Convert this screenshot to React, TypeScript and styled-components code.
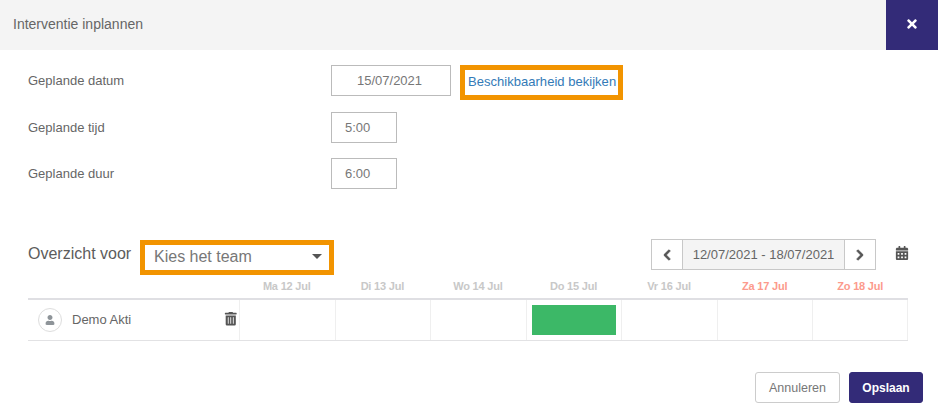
import React from 'react';
import styled, { createGlobalStyle } from 'styled-components';
import { FaTimes, FaChevronLeft, FaChevronRight, FaTrashAlt, FaCalendarAlt, FaUser } from 'react-icons/fa';

const GlobalStyle = createGlobalStyle`
  html, body {
    margin: 0;
    padding: 0;
    background: #fff;
  }
  body {
    font-family: "Liberation Sans", Arial, sans-serif;
    font-size: 13px;
    color: #666;
  }
  * {
    box-sizing: border-box;
  }
`;

const Modal = styled.div`
  width: 938px;
  height: 414px;
  overflow: hidden;
  background: #fff;
`;

const Header = styled.header`
  display: flex;
  align-items: center;
  justify-content: space-between;
  height: 50px;
  padding-left: 13px;
  background: #f4f4f4;
`;

const Title = styled.h4`
  margin: 0 0 3px;
  font-size: 14px;
  font-weight: 400;
  color: #666;
`;

const CloseButton = styled.button`
  display: flex;
  align-items: center;
  justify-content: center;
  width: 52px;
  height: 50px;
  border: 0;
  padding: 0 0 2px;
  background: #332b78;
  color: #fff;
  font-size: 14px;
`;

const Form = styled.section`
  display: flex;
  flex-direction: column;
  padding: 15px 0 0 28px;
  height: 190px;
`;

const FormRow = styled.div`
  display: flex;
  align-items: flex-start;
  height: ${props => props.$height}px;
`;

const Label = styled.label`
  width: 303px;
  line-height: 31px;
  color: #666;
`;

const Input = styled.div`
  width: ${props => props.$width}px;
  height: 31px;
  border: 1px solid #bbb;
  padding-left: ${props => props.$pad}px;
  line-height: 29px;
  font-size: 13px;
  color: #777;
`;

const Highlight = styled.div`
  display: flex;
  align-items: center;
  border: 5px solid #f29400;
`;

const LinkBox = styled(Highlight)`
  width: 163px;
  height: 35px;
  margin-left: 9px;
  padding: 0 0 3px 3px;
`;

const AvailabilityLink = styled.a`
  color: #337ab7;
  font-size: 13px;
  letter-spacing: 0.03px;
  white-space: nowrap;
`;

const Toolbar = styled.div`
  display: flex;
  align-items: flex-start;
  height: 35px;
  padding-left: 28px;
`;

const OverviewLabel = styled.span`
  width: 112px;
  padding-top: 5px;
  font-size: 16px;
  color: #5c5c5c;
`;

const SelectBox = styled(Highlight)`
  justify-content: space-between;
  width: 194px;
  height: 35px;
  padding: 0 7px 2px 9px;
  font-size: 16px;
  color: #777;
`;

const Caret = styled.span`
  width: 0;
  height: 0;
  border-left: 5px solid transparent;
  border-right: 5px solid transparent;
  border-top: 5px solid #555;
`;

const Pager = styled.div`
  display: flex;
  height: 31px;
  margin: -1px 0 0 317px;
  border: 1px solid #c8c8c8;
`;

const PagerButton = styled.button`
  display: flex;
  align-items: center;
  justify-content: center;
  width: 30px;
  padding: 0;
  border: 0;
  background: #fff;
  color: #555;
  font-size: 12px;
  svg {
    stroke: currentColor;
    stroke-width: 36;
  }
`;

const PagerRange = styled.div`
  width: 163px;
  border-left: 1px solid #c8c8c8;
  border-right: 1px solid #c8c8c8;
  background: #f4f4f4;
  line-height: 29px;
  text-align: center;
  font-size: 13px;
  color: #666;
`;

const CalendarButton = styled.span`
  display: flex;
  margin: 6px 0 0 19px;
  color: #555;
  font-size: 14px;
`;

const Schedule = styled.div`
  margin: 0 30px 0 28px;
`;

const DayHeader = styled.div`
  display: grid;
  grid-template-columns: 211px repeat(7, 1fr);
  height: 23px;
  padding-bottom: 2px;
  align-items: center;
`;

const Day = styled.span`
  text-align: center;
  font-size: 11px;
  font-weight: 700;
  letter-spacing: -0.2px;
  color: ${props => (props.$weekend ? '#fc9a8c' : '#c8c8c8')};
`;

const Row = styled.div`
  display: grid;
  grid-template-columns: 211px repeat(7, 1fr);
  height: 43px;
  border-top: 2px solid #dfdfe3;
  border-bottom: 1px solid #e2e2e4;
`;

const Person = styled.div`
  display: flex;
  align-items: center;
  padding: 0 2px 0 10px;
`;

const Avatar = styled.span`
  display: flex;
  align-items: center;
  justify-content: center;
  width: 24px;
  height: 24px;
  border: 1px solid #ddd;
  border-radius: 50%;
  color: #8e9499;
  font-size: 10px;
`;

const Name = styled.span`
  flex: 1;
  margin: 0 0 2px 10px;
  font-size: 13px;
  color: #666;
`;

const DeleteIcon = styled.span`
  display: flex;
  margin-bottom: 2px;
  color: #555;
  font-size: 13.5px;
`;

const Cell = styled.div`
  padding: 5px;
  border-left: 1px solid #efefef;
  &:last-child {
    border-right: 1px solid #efefef;
  }
`;

const Bar = styled.div`
  height: 30px;
  background: #3cb867;
`;

const Footer = styled.footer`
  display: flex;
  justify-content: flex-end;
  gap: 9px;
  margin-top: 31px;
  padding-right: 15px;
`;

const Button = styled.button`
  height: 31px;
  width: ${props => props.$width}px;
  padding: 0;
  border-radius: 3px;
  border: 1px solid ${props => (props.$primary ? '#332b78' : '#ccc')};
  background: ${props => (props.$primary ? '#332b78' : '#fff')};
  color: ${props => (props.$primary ? '#fff' : '#777')};
  font-family: "Liberation Sans", Arial, sans-serif;
  font-size: ${props => (props.$primary ? 12 : 12.5)}px;
  font-weight: ${props => (props.$primary ? 700 : 400)};
`;

const days = [
  { label: 'Ma 12 Jul' },
  { label: 'Di 13 Jul' },
  { label: 'Wo 14 Jul' },
  { label: 'Do 15 Jul', booked: true },
  { label: 'Vr 16 Jul' },
  { label: 'Za 17 Jul', weekend: true },
  { label: 'Zo 18 Jul', weekend: true },
];

const App = () => {
  return (
    <Modal>
      <GlobalStyle />
      <Header>
        <Title>Interventie inplannen</Title>
        <CloseButton><FaTimes /></CloseButton>
      </Header>
      <Form>
        <FormRow $height={47}>
          <Label>Geplande datum</Label>
          <Input $width={120} $pad={25}>15/07/2021</Input>
          <LinkBox>
            <AvailabilityLink>Beschikbaarheid bekijken</AvailabilityLink>
          </LinkBox>
        </FormRow>
        <FormRow $height={46}>
          <Label>Geplande tijd</Label>
          <Input $width={66} $pad={13}>5:00</Input>
        </FormRow>
        <FormRow $height={46}>
          <Label>Geplande duur</Label>
          <Input $width={66} $pad={13}>6:00</Input>
        </FormRow>
      </Form>
      <Toolbar>
        <OverviewLabel>Overzicht voor</OverviewLabel>
        <SelectBox>
          Kies het team
          <Caret />
        </SelectBox>
        <Pager>
          <PagerButton><FaChevronLeft /></PagerButton>
          <PagerRange>12/07/2021 - 18/07/2021</PagerRange>
          <PagerButton><FaChevronRight /></PagerButton>
        </Pager>
        <CalendarButton><FaCalendarAlt /></CalendarButton>
      </Toolbar>
      <Schedule>
        <DayHeader>
          <span />
          {days.map(day => (
            <Day key={day.label} $weekend={day.weekend}>{day.label}</Day>
          ))}
        </DayHeader>
        <Row>
          <Person>
            <Avatar><FaUser /></Avatar>
            <Name>Demo Akti</Name>
            <DeleteIcon><FaTrashAlt /></DeleteIcon>
          </Person>
          {days.map(day => (
            <Cell key={day.label}>{day.booked && <Bar />}</Cell>
          ))}
        </Row>
      </Schedule>
      <Footer>
        <Button $width={85}>Annuleren</Button>
        <Button $width={74} $primary>Opslaan</Button>
      </Footer>
    </Modal>
  );
};

export default App;
